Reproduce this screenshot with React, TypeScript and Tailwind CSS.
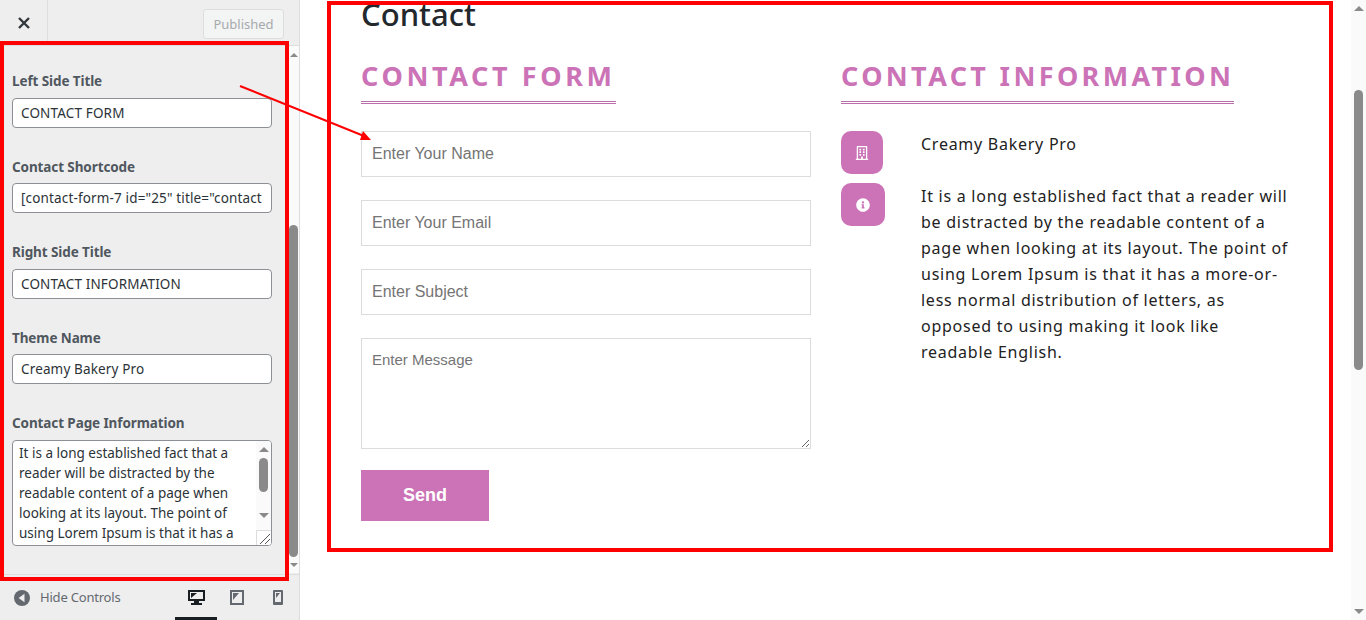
import { FaInfoCircle, FaRegBuilding } from 'react-icons/fa'

const sideFields = [
  { label: 'Left Side Title', value: 'CONTACT FORM', gap: 'mb-[7px]' },
  { label: 'Contact Shortcode', value: '[contact-form-7 id="25" title="contact', gap: 'mb-[6px]' },
  { label: 'Right Side Title', value: 'CONTACT INFORMATION', gap: 'mb-[7px]' },
  { label: 'Theme Name', value: 'Creamy Bakery Pro', gap: 'mb-[6px]' },
]

const textareaValue =
  'It is a long established fact that a\nreader will be distracted by the\nreadable content of a page when\nlooking at its layout. The point of\nusing Lorem Ipsum is that it has a\nmore-or-less normal distribution'

function Sidebar() {
  return (
    <aside className="w-[300px] h-full shrink-0 flex flex-col bg-[#eeeeee] border-r border-[#dddddd] text-[#50575e]">
      <header className="h-[46px] shrink-0 flex items-center border-b border-[#dddddd]">
        <div className="w-[48px] h-full flex items-center justify-center border-r border-[#dddddd] text-[#32373c]">
          <svg width="14" height="14" viewBox="0 0 14 14">
            <path d="M2 2 12 12M12 2 2 12" stroke="currentColor" strokeWidth="2.4" />
          </svg>
        </div>
        <div className="ml-auto mr-[15px] mt-[3px] pt-[2px] w-[81px] h-[30px] flex items-center justify-center rounded-[3px] border border-[#dddddd] bg-[#f3f4f4] text-[13px] text-[#a7aaad]">
          Published
        </div>
      </header>

      <div className="flex-1 min-h-0 flex">
        <div className="flex-1 min-w-0 pl-[12px] pr-[16px] pt-[25px]">
          {sideFields.map((f) => (
            <div key={f.label} className="mb-[29px]">
              <label className={`block h-[20px] ${f.gap} text-[13.5px] leading-[20px] font-bold tracking-[-0.1px]`}>{f.label}</label>
              <input
                readOnly
                value={f.value}
                className="w-full h-[30px] px-[8px] rounded-[4px] border border-[#8c8f94] bg-white text-[13.5px] tracking-[0.15px] text-[#2c3338] outline-none"
              />
            </div>
          ))}
          <label className="block h-[20px] mb-[7px] text-[13.5px] leading-[20px] font-bold tracking-[-0.1px]">Contact Page Information</label>
          <div className="relative h-[106px] rounded-[4px] border border-[#8c8f94] bg-white overflow-hidden">
            <textarea
              readOnly
              value={textareaValue}
              className="block w-full h-full pl-[6px] pt-[2px] pr-[20px] resize-none overflow-hidden whitespace-pre text-[13.5px] leading-[20px] tracking-[0px] text-[#2c3338] outline-none"
            />
            <div className="absolute right-0 top-0 bottom-0 w-[15px] bg-[#fafafa] flex flex-col items-center">
              <div className="mt-[6px] w-0 h-0 border-x-[5px] border-x-transparent border-b-[5px] border-b-[#8a8a8a]" />
              <div className="mt-[6px] w-[9px] h-[34px] rounded-full bg-[#8a8a8a]" />
              <div className="mt-[21px] w-0 h-0 border-x-[5px] border-x-transparent border-t-[5px] border-t-[#8a8a8a]" />
            </div>
            <div className="absolute right-0 bottom-0 w-[15px] h-[15px] border-l border-t border-[#dddddd] bg-white">
              <svg width="14" height="14" viewBox="0 0 14 14">
                <path d="M3 13 13 3M8 13 13 8" stroke="#555" strokeWidth="1" />
              </svg>
            </div>
          </div>
        </div>
        <div className="w-[11px] shrink-0 flex flex-col items-center bg-[#fafafa] mb-[1px]">
          <div className="mt-[7px] w-0 h-0 border-x-[4px] border-x-transparent border-b-[4px] border-b-[#8a8a8a]" />
          <div className="mt-[168px] w-[9px] h-[332px] rounded-full bg-[#8a8a8a]" />
          <div className="mt-[6px] w-0 h-0 border-x-[4px] border-x-transparent border-t-[4px] border-t-[#8a8a8a]" />
        </div>
      </div>

      <footer className="h-[46px] shrink-0 flex items-center border-t border-[#dddddd]">
        <svg className="ml-[14px]" width="16" height="16" viewBox="0 0 16 16">
          <circle cx="8" cy="8" r="8" fill="#646970" />
          <path d="M10.5 3.8v8.4L4.6 8z" fill="#eeeeee" />
        </svg>
        <span className="ml-[10px] text-[13px] tracking-[-0.2px] text-[#646970]">Hide Controls</span>
        <div className="ml-auto flex h-full">
          <div className="relative w-[42px] flex items-center justify-center text-[#191e23]">
            <svg width="17" height="16" viewBox="0 0 17 16">
              <path fillRule="evenodd" d="M0 0h17v11H0zM2 2v7h13V2z" fill="currentColor" />
              <path d="M3 3h6L3 8zM6 11h5v2h3v2H3v-2h3z" fill="currentColor" />
            </svg>
            <div className="absolute left-0 right-0 bottom-0 h-[3px] bg-[#191e23]" />
          </div>
          <div className="w-[41px] pr-[1px] flex items-center justify-center text-[#646970]">
            <svg width="14" height="15" viewBox="0 0 14 15">
              <path fillRule="evenodd" d="M0 0h14v15H0zM2 2v11h10V2z" fill="currentColor" />
              <path d="M3 3h6L3 10z" fill="currentColor" />
            </svg>
          </div>
          <div className="w-[40px] mr-[1px] flex items-center justify-center text-[#646970]">
            <svg width="10" height="15" viewBox="0 0 10 15">
              <path fillRule="evenodd" d="M1 0h8a1 1 0 0 1 1 1v13a1 1 0 0 1-1 1H1a1 1 0 0 1-1-1V1a1 1 0 0 1 1-1zM2 2v10h6V2z" fill="currentColor" />
              <path d="M3 3h4L3 8z" fill="currentColor" />
            </svg>
          </div>
        </div>
      </footer>
    </aside>
  )
}

function SectionTitle({ children, tracking }: { children: string; tracking: string }) {
  return (
    <div className="inline-block border-b-[3px] border-double border-[#b96fa9] pb-[10px]">
      <h2 className={`h-[30px] text-[27px] leading-[30px] font-bold ${tracking} text-[#cb73b6] whitespace-nowrap`}>{children}</h2>
    </div>
  )
}

const placeholderCls =
  'w-full border border-[#dcdcdc] px-[10px] font-["Liberation_Sans",sans-serif] text-[16px] text-[#333] placeholder:text-[#757575] outline-none'

function ContactForm() {
  return (
    <div className="w-[450px] shrink-0">
      <SectionTitle tracking="tracking-[3.62px]">CONTACT FORM</SectionTitle>
      <form className="mt-[27px] flex flex-col gap-[23px]">
        <input placeholder="Enter Your Name" className={`h-[46px] ${placeholderCls}`} />
        <input placeholder="Enter Your Email" className={`h-[46px] ${placeholderCls}`} />
        <input placeholder="Enter Subject" className={`h-[46px] ${placeholderCls}`} />
        <textarea
          placeholder="Enter Message"
          className='h-[111px] w-full border border-[#dcdcdc] px-[10px] py-[12px] font-["Liberation_Sans",sans-serif] text-[15px] leading-[18px] placeholder:text-[#757575] outline-none'
        />
      </form>
      <button className='mt-[21px] block w-[128px] h-[51px] bg-[#cb73b6] text-white text-[18px] font-bold font-["Liberation_Sans",sans-serif]'>
        Send
      </button>
    </div>
  )
}

function ContactInfo() {
  return (
    <div className="ml-[30px] w-[450px]">
      <SectionTitle tracking="tracking-[3.34px]">CONTACT INFORMATION</SectionTitle>
      <div className="mt-[27px] flex">
        <div className="w-[80px] shrink-0 flex flex-col gap-[9px]">
          <div className="w-[42px] h-[43px] rounded-[10px] bg-[#cb73b6] flex items-center justify-center text-white">
            <FaRegBuilding size={14} />
          </div>
          <div className="w-[44px] h-[43px] rounded-[10px] bg-[#cb73b6] flex items-center justify-center text-white">
            <FaInfoCircle size={14} />
          </div>
        </div>
        <div className="text-[16px] leading-[26px] tracking-[0.74px] text-[#222222]">
          <p>Creamy Bakery Pro</p>
          <p className="mt-[26px] whitespace-nowrap">
            It is a long established fact that a reader will
            <br />
            be distracted by the readable content of a
            <br />
            page when looking at its layout. The point of
            <br />
            using Lorem Ipsum is that it has a more-or-
            <br />
            less normal distribution of letters, as
            <br />
            opposed to using making it look like
            <br />
            readable English.
          </p>
        </div>
      </div>
    </div>
  )
}

export default function App() {
  return (
    <div className='relative h-[620px] w-[1366px] flex overflow-hidden bg-white font-["Noto_Sans",sans-serif]'>
      <Sidebar />

      <main className="flex-1 min-w-0 pl-[61px] overflow-hidden">
        <h1 className="-mt-[9px] h-[42px] text-[31px] leading-[46px] font-medium text-[#23282d]">Contact</h1>
        <div className="mt-[28px] flex">
          <ContactForm />
          <ContactInfo />
        </div>
      </main>

      {/* page scrollbar */}
      <div className="w-[15px] shrink-0 bg-[#fafafa] flex flex-col items-center">
        <div className="mt-[6px] w-0 h-0 border-x-[5px] border-x-transparent border-b-[5px] border-b-[#8a8a8a]" />
        <div className="mt-[79px] w-[9px] h-[280px] rounded-full bg-[#8a8a8a]" />
        <div className="mt-auto mb-[6px] w-0 h-0 border-x-[5px] border-x-transparent border-t-[5px] border-t-[#8a8a8a]" />
      </div>

      {/* annotations over the screenshot */}
      <div className="absolute left-0 top-[41px] w-[289px] h-[540px] border-[4px] border-[#ff0000]" />
      <div className="absolute left-[327px] top-[1px] w-[1006px] h-[551px] border-[4px] border-[#ff0000]" />
      <svg className="absolute left-0 top-0 pointer-events-none" width="400" height="160">
        <path d="M240 86 364 136" stroke="#ff0000" strokeWidth="2" />
        <path d="M371 140 360 140 363 131z" fill="#ff0000" />
      </svg>
    </div>
  )
}
